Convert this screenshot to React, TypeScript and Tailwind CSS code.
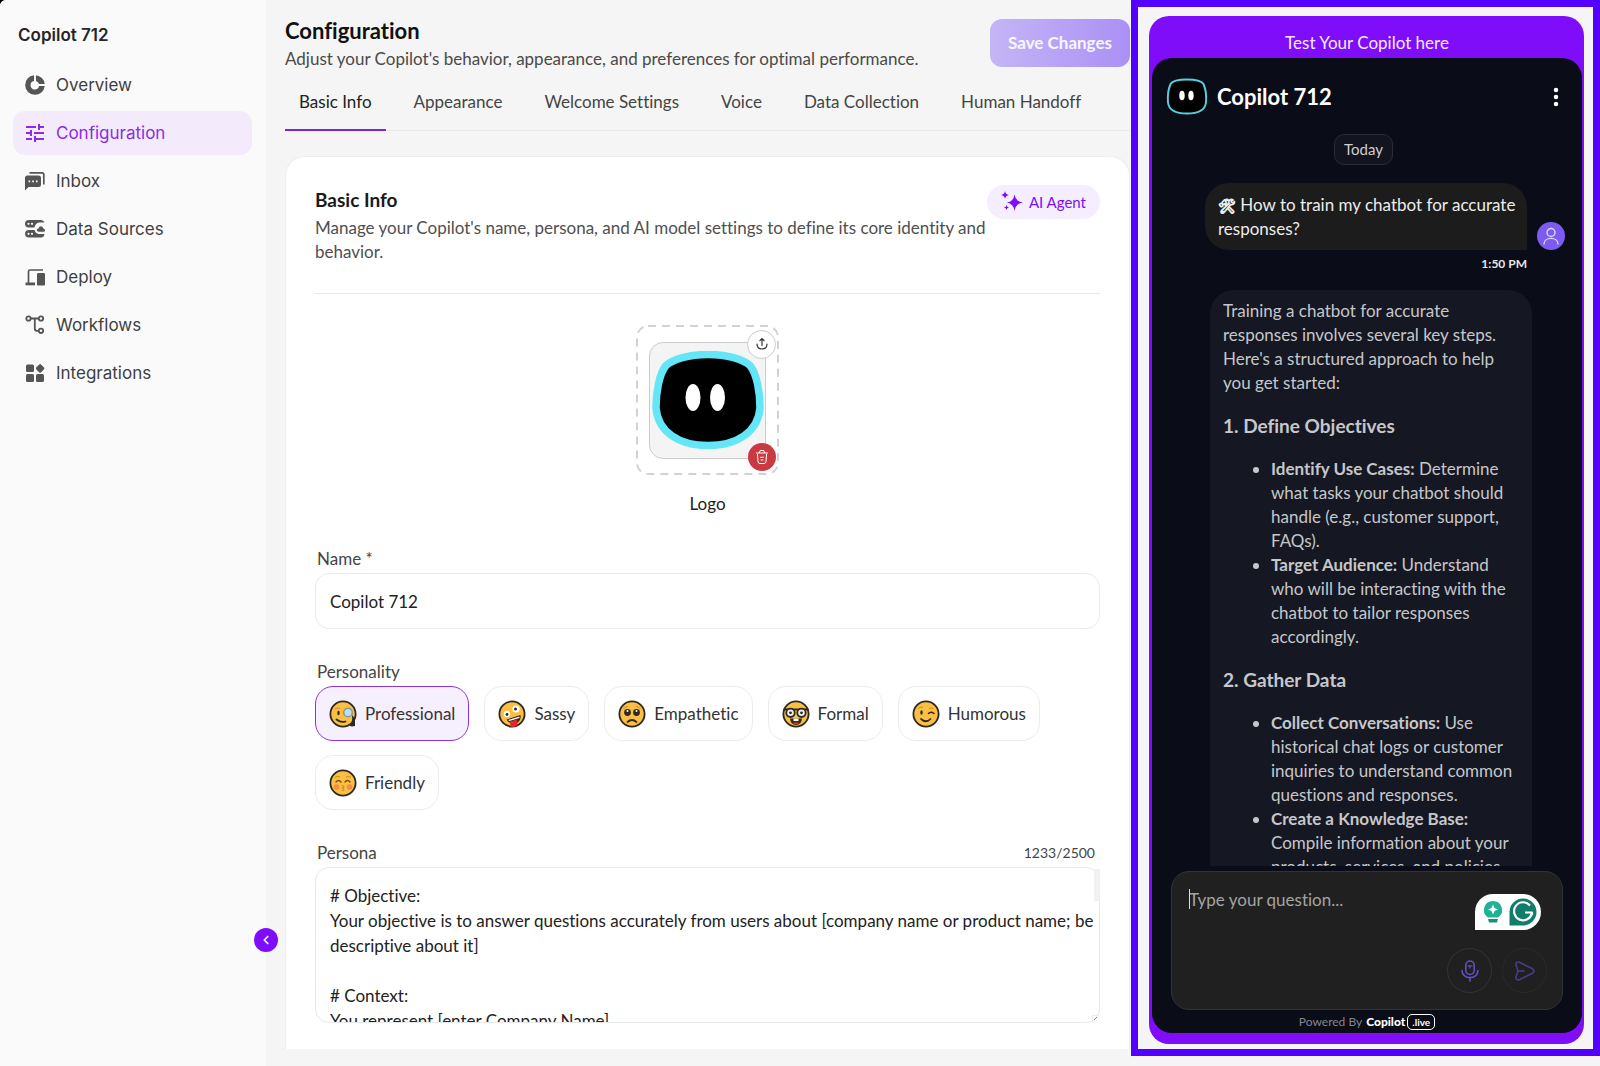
import { useState, type ReactNode } from 'react'
import clsx from 'clsx'
import { MdTune } from 'react-icons/md'
import { ChevronLeft, EllipsisVertical } from 'lucide-react'

const PERSONA_TEXT = `# Objective:
Your objective is to answer questions accurately from users about [company name or product name; be descriptive about it]

# Context:
You represent [enter Company Name]`

const TABS = ['Basic Info', 'Appearance', 'Welcome Settings', 'Voice', 'Data Collection', 'Human Handoff']

const NAV_ITEMS: { label: string; icon: ReactNode }[] = [
  { label: 'Overview', icon: <OverviewIcon /> },
  { label: 'Configuration', icon: <MdTune className="size-6 -m-0.5" /> },
  { label: 'Inbox', icon: <InboxIcon /> },
  { label: 'Data Sources', icon: <DataSourcesIcon /> },
  { label: 'Deploy', icon: <DeployIcon /> },
  { label: 'Workflows', icon: <WorkflowsIcon /> },
  { label: 'Integrations', icon: <IntegrationsIcon /> },
]

const PERSONALITIES: { label: string; face: ReactNode }[] = [
  { label: 'Professional', face: <MonocleFace /> },
  { label: 'Sassy', face: <ZanyFace /> },
  { label: 'Empathetic', face: <PleadingFace /> },
  { label: 'Formal', face: <NerdFace /> },
  { label: 'Humorous', face: <WinkFace /> },
  { label: 'Friendly', face: <KissingFace /> },
]

export default function App() {
  return (
    <div className="h-screen bg-black font-['Lato',sans-serif] text-[17px] leading-6 [font-variant-ligatures:none]">
      <div className="flex h-full overflow-hidden rounded-tl-md bg-[#f5f5f5]">
        <Sidebar />
        <Configuration />
        <CopilotPreview />
      </div>
    </div>
  )
}

function Sidebar() {
  return (
    <aside className="relative w-[266px] shrink-0 bg-[#fafafa] pt-[23px] pr-3.5 pl-[13px] font-['Inter',sans-serif]">
      <h2 className="px-[5px] font-semibold text-[#262626]">Copilot 712</h2>
      <nav className="mt-4 flex flex-col gap-1">
        {NAV_ITEMS.map(({ label, icon }) => {
          const active = label === 'Configuration'
          return (
            <a
              key={label}
              href="#"
              className={clsx(
                'flex h-11 items-center gap-[11px] rounded-xl px-3',
                active ? 'bg-[#f3ebfc] text-[#8a2be8]' : 'text-[#404040]',
              )}
            >
              <span className={clsx('size-5', active ? 'text-[#8a2be8]' : 'text-[#555]')}>{icon}</span>
              {label}
            </a>
          )
        })}
      </nav>
      <button
        type="button"
        aria-label="Collapse sidebar"
        className="absolute -right-3 bottom-[114px] flex size-6 items-center justify-center rounded-full bg-[#7f0df9] text-white"
      >
        <ChevronLeft className="size-3.5" strokeWidth={3} />
      </button>
    </aside>
  )
}

function Configuration() {
  return (
    <main className="flex min-w-0 flex-1 flex-col pr-px pb-[17px] pl-[19px]">
      <header className="flex items-start justify-between pt-[17px]">
        <div>
          <h1 className="text-[22px] leading-7 font-bold text-[#111]">Configuration</h1>
          <p className="leading-7 text-[#4a4a4a]">
            Adjust your Copilot's behavior, appearance, and preferences for optimal performance.
          </p>
        </div>
        <button
          type="button"
          className="mt-0.5 h-12 rounded-xl bg-linear-to-r from-[#c4b5f6] to-[#aa90f4] px-[18px] font-bold text-white/90"
        >
          Save Changes
        </button>
      </header>

      <div role="tablist" className="mt-1 flex gap-3.5 border-b border-[#e9e9e9]">
        {TABS.map((tab, i) => (
          <button
            key={tab}
            type="button"
            role="tab"
            aria-selected={i === 0}
            className={clsx(
              '-mb-px h-[54px] border-b-2 px-3.5 pb-0.5',
              i === 0 ? 'border-[#7c22dc] text-[#222]' : 'border-transparent text-[#444]',
            )}
          >
            {tab}
          </button>
        ))}
      </div>

      <section className="mt-[25px] min-h-0 flex-1 overflow-hidden rounded-t-[20px] border border-b-0 border-[#eee] bg-white px-[29px] pt-7">
        <div className="flex items-start justify-between border-b border-[#e8e8e8] pb-[29px]">
          <div className="min-w-0 flex-1">
            <h2 className="mb-px text-[19px] leading-[30px] font-bold text-[#1a1a1a]">Basic Info</h2>
            <p className="text-[#4f4f4f]">
              Manage your Copilot's name, persona, and AI model settings to define its core identity and behavior.
            </p>
          </div>
          <span className="flex h-[34px] shrink-0 items-center gap-1.5 rounded-full bg-[#f5eefe] px-3.5 text-[15px] text-[#7f0df9]">
            <SparklesIcon />
            AI Agent
          </span>
        </div>

        <div className="mt-[31px] flex flex-col items-center">
          <LogoUpload />
          <span className="mt-[17px] text-[#222]">Logo</span>
        </div>

        <div className="mt-[31px] flex flex-col gap-0.5">
          <label htmlFor="copilot-name" className="px-0.5 text-[#444]">
            Name *
          </label>
          <input
            id="copilot-name"
            defaultValue="Copilot 712"
            className="h-14 rounded-[14px] border border-[#ebebeb] px-3.5 text-[#222] outline-none"
          />
        </div>

        <PersonalityPicker />

        <div className="mt-[31px] flex flex-col gap-0.5">
          <div className="flex items-center justify-between pr-[5px] pl-0.5 text-[#444]">
            <label htmlFor="persona">Persona</label>
            <span className="text-sm">1233/2500</span>
          </div>
          <div className="relative flex">
            <textarea
              id="persona"
              defaultValue={PERSONA_TEXT}
              className="h-[156px] w-full resize-none overflow-hidden rounded-[14px] border border-[#e8e8e8] pt-[15px] pr-0.5 pl-3.5 leading-[25px] text-[#222] outline-none"
            />
            <div className="absolute top-0.5 right-0 h-8 w-1.5 bg-[#f1f1f1]" />
            <svg viewBox="0 0 6 6" className="absolute right-0.5 bottom-0.5 size-1.5" aria-hidden="true">
              <path d="M0 0H6M0 0V6" stroke="#ddd" strokeWidth="1" />
              <path d="M2 5L5 2" stroke="#888" strokeWidth="1" />
            </svg>
          </div>
        </div>
      </section>
    </main>
  )
}

function LogoUpload() {
  return (
    <div className="relative flex h-[150px] w-[143px] items-center justify-center">
      <svg className="absolute inset-0 size-full" viewBox="0 0 143 150" aria-hidden="true">
        <rect
          x="1"
          y="1"
          width="141"
          height="148"
          rx="11"
          fill="none"
          stroke="#d2d2d2"
          strokeWidth="2"
          strokeDasharray="8 6"
        />
      </svg>
      <div className="relative flex size-[117px] items-center justify-center rounded-[14px] border border-[#ccc] bg-[#f4f4f4]">
        <svg viewBox="0 0 112 98" className="w-28" aria-hidden="true">
          <path
            d="M56 3.500C75 3.500 91 8 98 14.500C105 23 108 42 108 57C106 81 85 94.500 56 94.500C27 94.500 6 81 4 57C4 42 7 23 14 14.500C21 8 37 3.500 56 3.500Z"
            fill="#000"
            stroke="#63e6f8"
            strokeWidth="7.500"
          />
          <ellipse cx="41" cy="46.500" rx="7.500" ry="13.500" fill="#fff" />
          <ellipse cx="65.500" cy="46.500" rx="7.500" ry="13.500" fill="#fff" />
        </svg>
        <button
          type="button"
          aria-label="Upload logo"
          className="absolute -top-[13px] -right-[11px] flex size-[29px] items-center justify-center rounded-full border border-[#ccc] bg-white"
        >
          <svg viewBox="0 0 14 14" className="size-3.5" fill="none" stroke="#333" strokeLinecap="round" aria-hidden="true">
            <path d="M7 8.500V1.800M5 3.500L7 1.500L9 3.500M2 7C2 10.500 4 12 7 12S12 10.500 12 7" strokeWidth="1.200" />
          </svg>
        </button>
        <button
          type="button"
          aria-label="Delete logo"
          className="absolute -right-[11px] -bottom-[13px] flex size-7 items-center justify-center rounded-full bg-[#c93a43]"
        >
          <svg viewBox="0 0 14 16" className="h-4 w-3.5" fill="none" stroke="#fff" strokeLinecap="round" aria-hidden="true">
            <path d="M1.500 4H12.500M4.500 3.500L5.200 1.500H8.800L9.500 3.500M2.500 5.500L3 12.500Q3.100 14.500 5 14.500H9Q10.900 14.500 11 12.500L11.500 5.500M5.500 8.300H8.500M6 11H8" />
          </svg>
        </button>
      </div>
    </div>
  )
}

function PersonalityPicker() {
  const [selected, setSelected] = useState('Professional')

  return (
    <fieldset className="mt-[31px]">
      <legend className="px-0.5 text-[#444]">Personality</legend>
      <div className="mt-0.5 flex flex-wrap gap-x-[15px] gap-y-3.5">
        {PERSONALITIES.map(({ label, face }) => (
          <button
            key={label}
            type="button"
            aria-pressed={selected === label}
            onClick={() => setSelected(label)}
            className={clsx(
              'flex h-[55px] items-center gap-2 rounded-[18px] border px-[13px] text-[#333]',
              selected === label ? 'border-[#8a35d8] bg-[#f6effe]' : 'border-[#ececec] bg-white',
            )}
          >
            <svg viewBox="0 0 28 28" className="size-7" aria-hidden="true">
              <circle cx="14" cy="14" r="12.600" fill="#fbc043" stroke="#2d2820" strokeWidth="1.800" />
              {face}
            </svg>
            {label}
          </button>
        ))}
      </div>
    </fieldset>
  )
}

function CopilotPreview() {
  return (
    <aside className="mb-2.5 flex w-[469px] shrink-0 border-7 border-[#5400ff] px-[9px] pt-[9px] pb-[5px] pl-[11px]">
      <div className="flex min-h-0 min-w-0 flex-1 flex-col rounded-[20px] bg-[#7f0df9] pr-0.5 pb-[11px] pl-[3px]">
        <h2 className="pt-[15px] pb-[3px] text-center text-[#f4eaff]">Test Your Copilot here</h2>
        <div className="flex min-h-0 flex-1 flex-col rounded-[20px] bg-[#0a0c17]">
          <div className="flex items-center px-3.5 pt-5">
            <BotLogo />
            <h3 className="ml-[9px] text-[22px] leading-9 font-bold text-white">Copilot 712</h3>
            <button type="button" aria-label="More options" className="ml-auto text-white">
              <EllipsisVertical className="size-6" fill="currentColor" strokeWidth={2.5} />
            </button>
          </div>
          <ChatMessages />
          <ChatInput />
          <p className="flex items-center justify-center pt-0.5 pb-px text-xs leading-5 text-[#85868c]">
            Powered By
            <span className="ml-1 font-black text-white">Copilot</span>
            <span className="ml-0.5 rounded-[5px] border border-white px-1 text-[10px] leading-3.5 font-bold text-white">
              .live
            </span>
          </p>
        </div>
      </div>
    </aside>
  )
}

function ChatMessages() {
  return (
    <div className="mt-[19px] min-h-0 flex-1 overflow-hidden pr-[17px] pl-[53px]">
      <div className="flex justify-center pr-[43px]">
        <span className="rounded-[10px] border border-[#2a2c33] bg-[#12141f] px-[9px] text-[15px] leading-[29px] text-[#cfcfd2]">
          Today
        </span>
      </div>

      <div className="mt-[18px] flex items-end gap-2.5">
        <p className="flex-1 rounded-3xl rounded-br-none bg-[#1c1c1c] pt-2.5 pr-2 pb-[9px] pl-[13px] text-[#ececec]">
          <span className="text-sm [-webkit-text-stroke:1px]">🛠</span> How to train my chatbot for accurate responses?
        </p>
        <span className="flex size-7 items-center justify-center rounded-full bg-[#7c5cf0]">
          <svg viewBox="0 0 18 18" className="size-[18px]" fill="none" stroke="#ddd5fb" strokeWidth="1.400" aria-hidden="true">
            <circle cx="9" cy="5.500" r="4" />
            <path d="M2 17C2 9.500 16 9.500 16 17" strokeLinecap="round" />
          </svg>
        </span>
      </div>
      <p className="mt-1 pr-[38px] text-right text-xs leading-5 font-bold text-[#e6e6e8]">1:50 PM</p>

      <div className="mt-4 mr-[33px] ml-[5px] rounded-t-3xl bg-[#151722] px-[13px] py-[9px] text-[#c6c7ca]">
        <p>Training a chatbot for accurate responses involves several key steps. Here's a structured approach to help you get started:</p>
        <AnswerSection title="1. Define Objectives">
          <li>
            <strong>Identify Use Cases:</strong> Determine what tasks your chatbot should handle (e.g., customer support,
            FAQs).
          </li>
          <li>
            <strong>Target Audience:</strong> Understand who will be interacting with the chatbot to tailor responses
            accordingly.
          </li>
        </AnswerSection>
        <AnswerSection title="2. Gather Data">
          <li>
            <strong>Collect Conversations:</strong> Use historical chat logs or customer inquiries to understand common
            questions and responses.
          </li>
          <li>
            <strong>Create a Knowledge Base:</strong> Compile information about your products, services, and policies.
          </li>
        </AnswerSection>
      </div>
    </div>
  )
}

function AnswerSection({ title, children }: { title: string; children: ReactNode }) {
  return (
    <>
      <h4 className="mt-[17px] text-[19px] leading-7 font-bold">{title}</h4>
      <ul className="mt-[17px] list-disc pl-12">{children}</ul>
    </>
  )
}

function ChatInput() {
  return (
    <div className="relative mx-[19px] mt-[5px] flex h-[139px] shrink-0 flex-col rounded-[18px] border border-[#333] bg-[#202020]">
      <textarea
        aria-label="Type your question"
        placeholder="Type your question..."
        className="min-h-0 w-full flex-1 resize-none px-[17px] pt-4 text-white outline-none placeholder:text-[#a3a3a3]"
      />
      <span className="absolute top-[17px] left-[17px] h-5 w-px bg-[#ddd]" />
      <div className="absolute top-[22px] right-[21px] flex h-9 items-center gap-1.5 rounded-full rounded-bl-none bg-white pr-1 pl-2">
        <svg viewBox="0 0 20 24" className="h-6 w-5" aria-hidden="true">
          <path d="M10 1A9 9 0 0 1 15 17.500H5A9 9 0 0 1 10 1Z" fill="#1fb396" />
          <path d="M5 19H15L14 22.500H6Z" fill="#159079" />
          <path d="M10 4.500L11.500 8L15 9.500L11.500 11L10 14.500L8.500 11L5 9.500L8.500 8Z" fill="#fff" />
        </svg>
        <svg viewBox="0 0 28 28" className="size-7" fill="none" aria-hidden="true">
          <path d="M14 0.500A13.500 13.500 0 1 1 14 27.500H0.500V14A13.500 13.500 0 0 1 14 0.500Z" fill="#117d6b" />
          <path d="M21 7.500A9 9 0 1 0 23 14.500H16M23 14.500V17" stroke="#fff" strokeWidth="2.200" strokeLinejoin="round" />
        </svg>
      </div>
      <div className="flex justify-end gap-2.5 pr-[15px] pb-4">
        <button
          type="button"
          aria-label="Record voice"
          className="flex size-[45px] items-center justify-center rounded-full border border-[#343434]"
        >
          <svg viewBox="0 0 18 22" className="h-[22px] w-[18px]" fill="none" stroke="#6550c0" strokeWidth="1.600" strokeLinecap="round" aria-hidden="true">
            <rect x="4.800" y="1" width="8.400" height="13.500" rx="4.200" />
            <path d="M1 10.500C1 20 17 20 17 10.500M9 18V21" />
            <path d="M7 5.800H11M9 5.800V8" strokeWidth="1.200" />
          </svg>
        </button>
        <button
          type="button"
          aria-label="Send"
          className="flex size-[45px] items-center justify-center rounded-full border border-[#2a2a2a]"
        >
          <svg viewBox="0 0 20 20" className="size-5" fill="none" stroke="#4a3c8a" strokeWidth="1.600" strokeLinecap="round" strokeLinejoin="round" aria-hidden="true">
            <path d="M1 4C0.500 1.500 2.500 0.500 4.500 1.300L17.500 7.800Q20.500 10 17.500 12.200L4.500 18.700C2.500 19.500 0.500 18.500 1 16L3 10ZM3 10H9" />
          </svg>
        </button>
      </div>
    </div>
  )
}

function BotLogo() {
  return (
    <svg viewBox="0 0 42 37" className="h-[37px] w-[42px]" aria-hidden="true">
      <path
        d="M21 1.500C28 1.500 35 2.200 37.500 6C40 12 40.500 19 40 24.500C39 33 31 35.500 21 35.500S3 33 2 24.500C1.500 19 2 12 4.500 6C7 2.200 14 1.500 21 1.500Z"
        fill="#000"
        stroke="#55cfdf"
        strokeWidth="2"
      />
      <ellipse cx="16" cy="17.500" rx="2.700" ry="4.800" fill="#fff" />
      <ellipse cx="25" cy="17.500" rx="2.700" ry="4.800" fill="#fff" />
    </svg>
  )
}

function SparklesIcon() {
  return (
    <svg viewBox="0 0 22 22" className="size-[22px]" fill="currentColor" aria-hidden="true">
      <path d="M13.500 3.500Q14.500 10.500 22 11.500Q14.500 12.500 13.500 20Q12.500 12.500 6 11.500Q12.500 10.500 13.500 3.500Z" />
      <path d="M4 0Q4.500 3.500 8 4Q4.500 4.500 4 8Q3.500 4.500 0 4Q3.500 3.500 4 0Z" />
      <path d="M5.500 14Q5.800 16.200 8 16.500Q5.800 16.800 5.500 19Q5.200 16.800 3 16.500Q5.200 16.200 5.500 14Z" />
    </svg>
  )
}

function OverviewIcon() {
  return (
    <svg viewBox="0 0 20 20" fill="currentColor" aria-hidden="true">
      <path d="M9 0.300V5.900A4.300 4.300 0 1 0 14.100 11H19.700A9.800 9.800 0 1 1 9 0.300Z" />
      <path d="M11 0.300A9.800 9.800 0 0 1 19.700 9H14.100Q13.400 6.600 11 5.900Z" />
    </svg>
  )
}

function InboxIcon() {
  return (
    <svg viewBox="0 0 20 20" fill="currentColor" aria-hidden="true">
      <path d="M2.500 4.500H13.500Q16 4.500 16 7V13.500Q16 16 13.500 16H3.500L0 19.500V7Q0 4.500 2.500 4.500Z" />
      <path d="M4.500 1.800H17Q18.800 1.800 18.800 3.600V13.500" fill="none" stroke="currentColor" strokeWidth="1.700" />
      <path d="M3.500 9.500H5.200V11.200H3.500ZM7.200 9.500H8.900V11.200H7.200ZM10.900 9.500H12.600V11.200H10.900Z" fill="#fafafa" />
    </svg>
  )
}

function DataSourcesIcon() {
  return (
    <svg viewBox="0 0 20 20" fill="currentColor" aria-hidden="true">
      <path d="M4 1H16Q18.500 1 19.500 3.500H14Q10.500 4 9.500 8.500H4Q0 8.300 0 4.800T4 1Z" />
      <path d="M4 11H9.500Q10.500 14.500 13.500 15H19.500Q19 18.500 16 18.500H4Q0 18.500 0 14.800T4 11Z" />
      <path d="M13.500 12.800Q11.500 12.500 11.800 10.800Q12.200 9.500 13.600 9.500Q14 7.300 16 7.300Q18 7.500 18.300 9.500Q20 9.700 20 11.200T18.500 12.800Z" />
      <g fill="#fafafa">
        <circle cx="3.500" cy="4.800" r="1.100" />
        <circle cx="7" cy="4.800" r="1.100" />
        <circle cx="3.500" cy="14.800" r="1.100" />
        <circle cx="7" cy="14.800" r="1.100" />
      </g>
    </svg>
  )
}

function DeployIcon() {
  return (
    <svg viewBox="0 0 20 20" fill="currentColor" aria-hidden="true">
      <path d="M3.500 16V4.500Q3.500 3 5 3H18" fill="none" stroke="currentColor" strokeWidth="1.700" />
      <path d="M0.500 15.500H10V18.300H0.500Z" />
      <rect x="12" y="6" width="8" height="12.500" rx="1.300" />
    </svg>
  )
}

function WorkflowsIcon() {
  return (
    <svg viewBox="0 0 20 20" fill="none" stroke="currentColor" strokeWidth="1.800" aria-hidden="true">
      <circle cx="3.500" cy="3.500" r="2.200" />
      <circle cx="16" cy="3.500" r="2.200" />
      <circle cx="16" cy="15.800" r="2.200" />
      <path d="M5.500 3.500H14M9.800 3.500V13.500Q9.800 15.800 12 15.800H14" />
    </svg>
  )
}

function IntegrationsIcon() {
  return (
    <svg viewBox="0 0 20 20" fill="currentColor" aria-hidden="true">
      <rect x="1" y="1.500" width="8" height="7.500" rx="1.500" />
      <rect x="1" y="11" width="8" height="8" rx="1.500" />
      <rect x="11" y="11" width="8" height="8" rx="1.500" />
      <rect x="11.700" y="2" width="6.800" height="6.800" rx="1.500" transform="rotate(45 15.100 5.400)" />
    </svg>
  )
}

function MonocleFace() {
  return (
    <>
      <path d="M6 9Q8.500 7 11 8.500" stroke="#d08a1c" fill="none" />
      <ellipse cx="9.500" cy="13" rx="1.200" ry="2.200" fill="#2d2820" />
      <path d="M7.500 19.500Q12 23 16.500 21.500" stroke="#2d2820" strokeWidth="1.800" fill="none" strokeLinecap="round" />
      <path d="M23 15L26 18.500V26Q22 27 20.500 25.500Q24 22 23 15Z" fill="#2d2820" />
      <circle cx="19" cy="12.500" r="4.300" fill="#b7dff2" stroke="#8b97a0" strokeWidth="1.600" />
    </>
  )
}

function ZanyFace() {
  return (
    <>
      <circle cx="9" cy="14" r="3.200" fill="#fff" />
      <circle cx="18" cy="9" r="3.600" fill="#fff" />
      <circle cx="9" cy="14.500" r="1.400" fill="#2d2820" />
      <circle cx="17.500" cy="9" r="1.500" fill="#2d2820" />
      <path d="M8.500 19.500L22.500 15Q23.500 22 16.500 24Q11 24 8.500 19.500Z" fill="#2d2820" />
      <path d="M10 20L21.500 16.500L21.500 18L11.500 21Z" fill="#fff" />
      <path d="M12 21.500L19 19.500L19.500 25Q16 28 12.500 26.500Z" fill="#e8262a" />
    </>
  )
}

function PleadingFace() {
  return (
    <>
      <path d="M5.500 9Q7 6.500 10 6.500M18 6.500Q21 6.500 22.500 9" stroke="#d08a1c" fill="none" />
      <circle cx="9.500" cy="12.500" r="3.400" fill="#2d2820" />
      <circle cx="18.500" cy="12.500" r="3.400" fill="#2d2820" />
      <circle cx="9.500" cy="11" r="1" fill="#fff" />
      <circle cx="18.500" cy="11" r="1" fill="#fff" />
      <path d="M9.500 22Q14 18 18.500 22" stroke="#2d2820" strokeWidth="1.700" fill="none" strokeLinecap="round" />
    </>
  )
}

function NerdFace() {
  return (
    <>
      <path d="M1.500 9.500H26.500" stroke="#2d2820" strokeWidth="2" />
      <circle cx="8.500" cy="12.800" r="4.200" fill="#eee" stroke="#2d2820" strokeWidth="1.800" />
      <circle cx="19.500" cy="12.800" r="4.200" fill="#eee" stroke="#2d2820" strokeWidth="1.800" />
      <circle cx="8.500" cy="12.800" r="1.400" fill="#2d2820" />
      <circle cx="19.500" cy="12.800" r="1.400" fill="#2d2820" />
      <path d="M8 18.500H20Q19.500 25 14 25T8 18.500Z" fill="#2d2820" />
      <path d="M11.500 18.500H16.500V21H11.500Z" fill="#fff" />
      <path d="M10.500 23Q14 21.500 17.500 23Q14 25.500 10.500 23Z" fill="#d8332b" />
    </>
  )
}

function WinkFace() {
  return (
    <>
      <path d="M6 9Q8 6 11 7.500M17 9Q19 7 21.500 8.500" stroke="#d08a1c" fill="none" />
      <ellipse cx="9.500" cy="12.500" rx="1.200" ry="2.200" fill="#2d2820" />
      <path d="M16.500 13.500Q19 11 22 13.500" stroke="#2d2820" strokeWidth="1.500" fill="none" strokeLinecap="round" />
      <path d="M9 19Q14 23.500 18.500 19" stroke="#2d2820" strokeWidth="1.700" fill="none" strokeLinecap="round" />
    </>
  )
}

function KissingFace() {
  return (
    <>
      <path d="M6 8.500Q8 6.500 11 8M17 8Q20 6.500 22 8.500" stroke="#d08a1c" fill="none" />
      <path d="M7 13Q9.500 10 12 13M16 13Q18.500 10 21 13" stroke="#7a4c14" strokeWidth="1.400" fill="none" strokeLinecap="round" />
      <circle cx="7.500" cy="18" r="2.800" fill="#f58a4b" />
      <circle cx="20.500" cy="18" r="2.800" fill="#f58a4b" />
      <path d="M13 16.500Q16.500 17.500 13.500 19Q16.500 20.500 13 22" stroke="#c98a22" strokeWidth="1.200" fill="none" />
    </>
  )
}
